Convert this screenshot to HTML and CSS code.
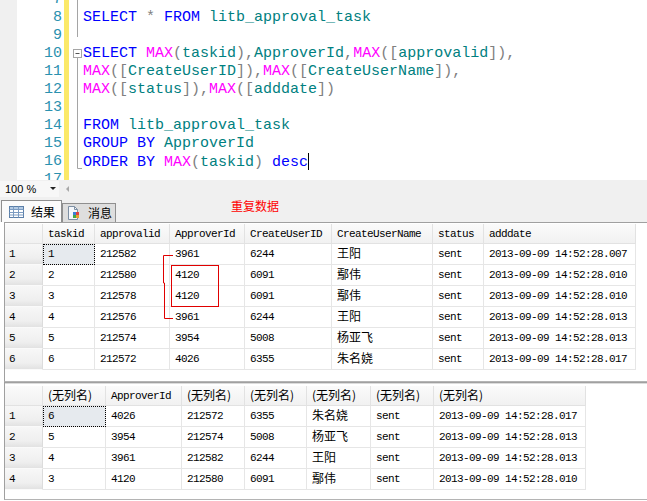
FILE: index.html
```html
<!DOCTYPE html>
<html>
<head>
<meta charset="utf-8">
<link rel="stylesheet" href="styles.css">
</head>
<body>
<div class="editor">
  <div class="strip"></div>
  <div class="gutter"><div class="lines"><div>7</div><div>8</div><div>9</div><div>10</div><div>11</div><div>12</div><div>13</div><div>14</div><div>15</div><div>16</div><div>17</div></div></div>
  <div class="changebar"></div>
  <div class="outline">
    <svg width="14" height="180" viewBox="0 0 14 180">
      <path d="M8.5 0V37M8.5 58V168.5H13" stroke="#a5a5a5" fill="none"/>
      <rect x="4.5" y="49.5" width="8" height="8" fill="#fff" stroke="#a5a5a5"/>
      <path d="M6.5 53.5H10.5" stroke="#555"/>
    </svg>
  </div>
  <div class="code"><div class="lines">
<div></div>
<div><span class="k">SELECT</span> <span class="p">*</span> <span class="k">FROM</span> <span class="i">litb_approval_task</span></div>
<div></div>
<div><span class="k">SELECT</span> <span class="f">MAX</span><span class="p">(</span><span class="i">taskid</span><span class="p">),</span><span class="i">ApproverId</span><span class="p">,</span><span class="f">MAX</span><span class="p">([</span><span class="i">approvalid</span><span class="p">]),</span></div>
<div><span class="f">MAX</span><span class="p">([</span><span class="i">CreateUserID</span><span class="p">]),</span><span class="f">MAX</span><span class="p">([</span><span class="i">CreateUserName</span><span class="p">]),</span></div>
<div><span class="f">MAX</span><span class="p">([</span><span class="i">status</span><span class="p">]),</span><span class="f">MAX</span><span class="p">([</span><span class="i">adddate</span><span class="p">])</span></div>
<div></div>
<div><span class="k">FROM</span> <span class="i">litb_approval_task</span></div>
<div><span class="k">GROUP BY</span> <span class="i">ApproverId</span></div>
<div><span class="k">ORDER BY</span> <span class="f">MAX</span><span class="p">(</span><span class="i">taskid</span><span class="p">)</span> <span class="k">desc</span><span class="cursor"></span></div>
<div></div>
  </div></div>
</div>

<div class="toolbar">
  <div class="zoom"><span>100 %</span><span class="drop"></span></div>
  <span class="leftarrow"></span>
</div>

<div class="tabs">
  <div class="tab active">
    <svg width="15" height="12" viewBox="0 0 15 12"><rect x="0.5" y="0.5" width="14" height="11" fill="#fff" stroke="#5b7fa8"/><rect x="1" y="1" width="13" height="2.5" fill="#b4cbe4"/><path d="M0.5 3.5H14.5M0.5 6.5H14.5M0.5 9H14.5M4.5 0.5V11.5M9.5 0.5V11.5" stroke="#7c9cc2" fill="none"/></svg>
    <span>结果</span>
  </div>
  <div class="tab">
    <svg width="13" height="14" viewBox="0 0 13 14"><path d="M1.5 0.5H7.5L10.5 3.5V13.5H1.5Z" fill="#f4f7fb" stroke="#7d8fa3"/><path d="M7.5 0.5V3.5H10.5" fill="none" stroke="#7d8fa3"/><rect x="6" y="6" width="3" height="3" fill="#3a7fd6"/><rect x="9" y="6" width="3" height="3" fill="#e04040"/><rect x="6" y="9" width="3" height="3" fill="#42a845"/><rect x="9" y="9" width="3" height="3" fill="#e8a030"/></svg>
    <span>消息</span>
  </div>
  <div class="note">重复数据</div>
</div>

<div class="panel p1">
  <div class="grid g1">
    <div class="h rh0"></div><div class="h">taskid</div><div class="h">approvalid</div><div class="h">ApproverId</div><div class="h">CreateUserID</div><div class="h">CreateUserName</div><div class="h">status</div><div class="h">adddate</div>
    <div class="rh">1</div><div class="sel">1</div><div>212582</div><div>3961</div><div>6244</div><div class="cj">王阳</div><div>sent</div><div>2013-09-09 14:52:28.007</div>
    <div class="rh">2</div><div>2</div><div>212580</div><div>4120</div><div>6091</div><div class="cj">鄢伟</div><div>sent</div><div>2013-09-09 14:52:28.010</div>
    <div class="rh">3</div><div>3</div><div>212578</div><div>4120</div><div>6091</div><div class="cj">鄢伟</div><div>sent</div><div>2013-09-09 14:52:28.010</div>
    <div class="rh">4</div><div>4</div><div>212576</div><div>3961</div><div>6244</div><div class="cj">王阳</div><div>sent</div><div>2013-09-09 14:52:28.013</div>
    <div class="rh">5</div><div>5</div><div>212574</div><div>3954</div><div>5008</div><div class="cj">杨亚飞</div><div>sent</div><div>2013-09-09 14:52:28.013</div>
    <div class="rh">6</div><div>6</div><div>212572</div><div>4026</div><div>6355</div><div class="cj">朱名娆</div><div>sent</div><div>2013-09-09 14:52:28.017</div>
  </div>
</div>

<div class="panel p2">
  <div class="grid g2">
    <div class="h rh0"></div><div class="h cj">(无列名)</div><div class="h">ApproverId</div><div class="h cj">(无列名)</div><div class="h cj">(无列名)</div><div class="h cj">(无列名)</div><div class="h cj">(无列名)</div><div class="h cj">(无列名)</div>
    <div class="rh">1</div><div class="sel">6</div><div>4026</div><div>212572</div><div>6355</div><div class="cj">朱名娆</div><div>sent</div><div>2013-09-09 14:52:28.017</div>
    <div class="rh">2</div><div>5</div><div>3954</div><div>212574</div><div>5008</div><div class="cj">杨亚飞</div><div>sent</div><div>2013-09-09 14:52:28.013</div>
    <div class="rh">3</div><div>4</div><div>3961</div><div>212582</div><div>6244</div><div class="cj">王阳</div><div>sent</div><div>2013-09-09 14:52:28.013</div>
    <div class="rh">4</div><div>3</div><div>4120</div><div>212580</div><div>6091</div><div class="cj">鄢伟</div><div>sent</div><div>2013-09-09 14:52:28.010</div>
  </div>
</div>

<svg class="marks" width="647" height="501" viewBox="0 0 647 501">
  <path d="M173 255.5H163.5V283H164.5V318.5H173" fill="none" stroke="#e00000"/>
  <rect x="171.5" y="265.5" width="47" height="41" fill="none" stroke="#e00000"/>
</svg>
</body>
</html>
```

FILE: styles.css
```css
html, body {
  margin: 0;
  padding: 0;
}
body {
  width: 647px;
  height: 501px;
  overflow: hidden;
  background: #fff;
  position: relative;
  font-family: "Liberation Sans", sans-serif;
}

/* editor */
.editor {
  display: flex;
  height: 180px;
  overflow: hidden;
  background: #fff;
}
.strip {
  width: 17px;
  background: #f0f0f0;
}
.gutter {
  width: 45px;
  padding-right: 2px;
  text-align: right;
  color: #2b91af;
}
.gutter, .code {
  font: 15px/18px "Liberation Mono", monospace;
}
.lines {
  margin-top: -9px;
}
.lines > div {
  height: 18px;
  white-space: pre;
}
.changebar {
  width: 5px;
  background: #fbe969;
}
.outline {
  width: 14px;
}
.outline svg {
  display: block;
}
.code {
  flex: 1;
}
.k { color: #0000ff; }
.f { color: #ff00ff; }
.i { color: #008080; }
.p { color: #808080; }
.cursor {
  display: inline-block;
  width: 1px;
  height: 17px;
  background: #000;
  vertical-align: -4px;
}

/* zoom toolbar */
.toolbar {
  height: 17px;
  background: #f0f0f0;
  display: flex;
  align-items: center;
}
.zoom {
  width: 59px;
  height: 16px;
  box-sizing: border-box;
  display: flex;
  align-items: center;
  padding-left: 5px;
  padding-right: 3px;
  background: #f7f7f7;
  font-size: 11px;
  color: #000;
}
.drop {
  margin-left: auto;
  width: 0;
  height: 0;
  border-left: 3px solid transparent;
  border-right: 3px solid transparent;
  border-top: 3px solid #222;
}
.leftarrow {
  margin-left: 7px;
  width: 0;
  height: 0;
  border-top: 3px solid transparent;
  border-bottom: 3px solid transparent;
  border-right: 3px solid #a8a8a8;
}

/* tabs */
.tabs {
  height: 25px;
  background: #f0f0f0;
  display: flex;
  align-items: flex-end;
  padding-left: 1px;
}
.tab {
  box-sizing: border-box;
  height: 19px;
  width: 54px;
  display: flex;
  align-items: center;
  gap: 8px;
  padding-left: 4px;
  border: 1px solid #8f8f8f;
  border-bottom: none;
  background: #dedede;
  font: 12px/14px "Noto Sans CJK SC", sans-serif;
  color: #000;
}
.tab.active {
  height: 22px;
  width: 61px;
  padding-left: 7px;
  gap: 7px;
  background: #fbfbfb;
}
.tab svg {
  display: block;
  flex: none;
}
.note {
  align-self: flex-start;
  margin-top: 2px;
  margin-left: 115px;
  font: 12px/14px "Noto Sans CJK SC", sans-serif;
  color: #f00;
}

/* result panels */
.panel {
  box-sizing: border-box;
  margin-left: 4px;
  border-left: 1px solid #a0a0a0;
  border-top: 1px solid #a0a0a0;
  border-bottom: 1px solid #b4b4b4;
  background: #fff;
}
.p1 {
  height: 160px;
  padding-top: 1px;
}
.p2 {
  height: 118px;
  padding-top: 3px;
  box-shadow: inset 0 1px 0 #dcdcdc;
}

.grid {
  display: grid;
  grid-template-rows: 20px;
  grid-auto-rows: 21px;
  font: 11px "Liberation Mono", "Noto Sans CJK SC", monospace;
  letter-spacing: -0.6px;
  color: #000;
}
.g1 {
  grid-template-columns: 38px 52px 75px 75px 87px 101px 51px 152px;
}
.g2 {
  grid-template-columns: 38px 63px 76px 63px 62px 64px 63px 152px;
}
.grid > div {
  box-sizing: border-box;
  display: flex;
  align-items: center;
  padding-left: 5px;
  white-space: nowrap;
  overflow: hidden;
  border-right: 1px solid #e6e6e6;
  border-bottom: 1px solid #e6e6e6;
}
.grid > .h {
  background: linear-gradient(#fbfbfb, #f1f1f1);
  border-right-color: #e2e2e2;
  border-bottom-color: #e2e2e2;
}
.grid > .rh {
  padding-left: 4px;
  background: linear-gradient(#f7f7f7 0%, #efefef 70%, #e2e2e2 100%);
  border-bottom-color: #fafafa;
  border-right-color: #dcdcdc;
}
.grid > .cj {
  font-family: "Noto Sans CJK SC", sans-serif;
  font-size: 12px;
  line-height: 14px;
  letter-spacing: 0;
  padding-bottom: 2px;
}
.grid > .sel {
  background: #e6eaee;
  outline: 1px dotted #000;
  outline-offset: -1px;
}

/* annotations drawn over the grid */
.marks {
  position: absolute;
  left: 0;
  top: 0;
  pointer-events: none;
}
```
